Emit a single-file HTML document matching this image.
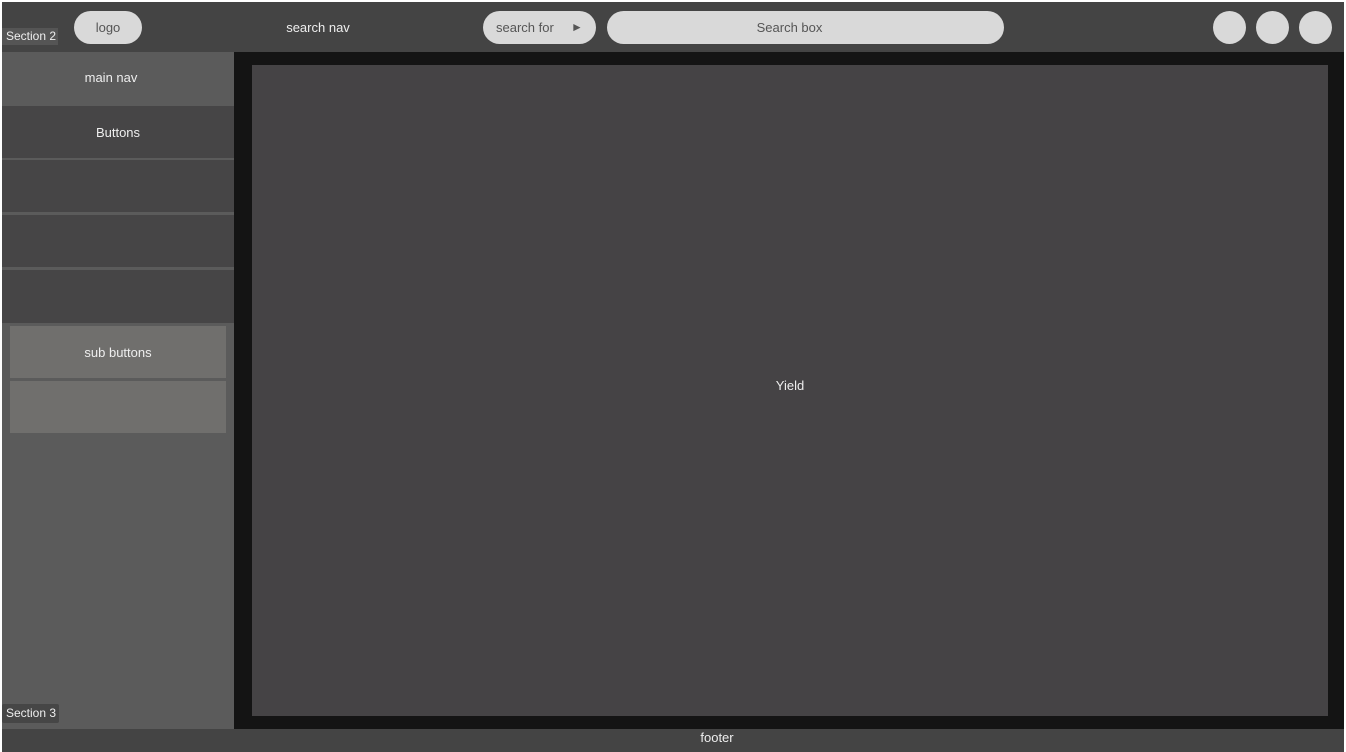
<!DOCTYPE html>
<html><head><style>
*{margin:0;padding:0;box-sizing:border-box}
body{width:1346px;height:752px;background:#fff;position:relative;overflow:hidden;font-family:"Liberation Sans",sans-serif;font-size:13px}
.a{position:absolute}
.c{display:flex;align-items:center;justify-content:center}
.pill{background:#d9d9d9;border-radius:17px;color:#555}
</style></head><body>
<div class="a" style="left:2px;top:2px;width:1342px;height:50px;background:#444"></div>
<div class="a c pill" style="left:74px;top:11px;width:68px;height:33px">logo</div>
<div class="a" style="left:2px;top:28px;width:56px;height:17px;background:#555;color:#eee;font-size:12px;line-height:17px;padding-left:4px">Section 2</div>
<div class="a c" style="left:268px;top:11px;width:100px;height:33px;color:#eee">search nav</div>
<div class="a pill" style="left:483px;top:11px;width:113px;height:33px;line-height:33px;padding-left:13px">search for <span style="position:absolute;left:88px;font-size:12px">&#9658;</span></div>
<div class="a c pill" style="left:607px;top:11px;width:397px;height:33px;padding-right:32px">Search box</div>
<div class="a" style="left:1213px;top:11px;width:33px;height:33px;border-radius:50%;background:#d9d9d9"></div>
<div class="a" style="left:1256px;top:11px;width:33px;height:33px;border-radius:50%;background:#d9d9d9"></div>
<div class="a" style="left:1299px;top:11px;width:33px;height:33px;border-radius:50%;background:#d9d9d9"></div>

<div class="a" style="left:2px;top:52px;width:232px;height:677px;background:#5b5b5b"></div>
<div class="a c" style="left:2px;top:51px;width:218px;height:53px;color:#eee">main nav</div>
<div class="a c" style="left:2px;top:106px;width:232px;height:52px;background:#464546;color:#eee">Buttons</div>
<div class="a" style="left:2px;top:160px;width:232px;height:52px;background:#464546"></div>
<div class="a" style="left:2px;top:215px;width:232px;height:52px;background:#464546"></div>
<div class="a" style="left:2px;top:270px;width:232px;height:53px;background:#464546"></div>
<div class="a c" style="left:10px;top:326px;width:216px;height:52px;background:#706f6d;color:#eee">sub buttons</div>
<div class="a" style="left:10px;top:381px;width:216px;height:52px;background:#706f6d"></div>
<div class="a" style="left:2px;top:704px;width:57px;height:19px;background:#464646;border-radius:2px;color:#eee;font-size:12px;line-height:19px;padding-left:4px">Section 3</div>

<div class="a" style="left:234px;top:52px;width:1110px;height:677px;background:#141414"></div>
<div class="a c" style="left:252px;top:65px;width:1076px;height:651px;background:#454345;color:#eee;padding-bottom:10px">Yield</div>
<div class="a" style="left:2px;top:729px;width:1342px;height:23px;background:#444"></div>
<div class="a" style="left:667px;top:729px;width:100px;height:17px;line-height:17px;text-align:center;color:#eee">footer</div>
</body></html>
